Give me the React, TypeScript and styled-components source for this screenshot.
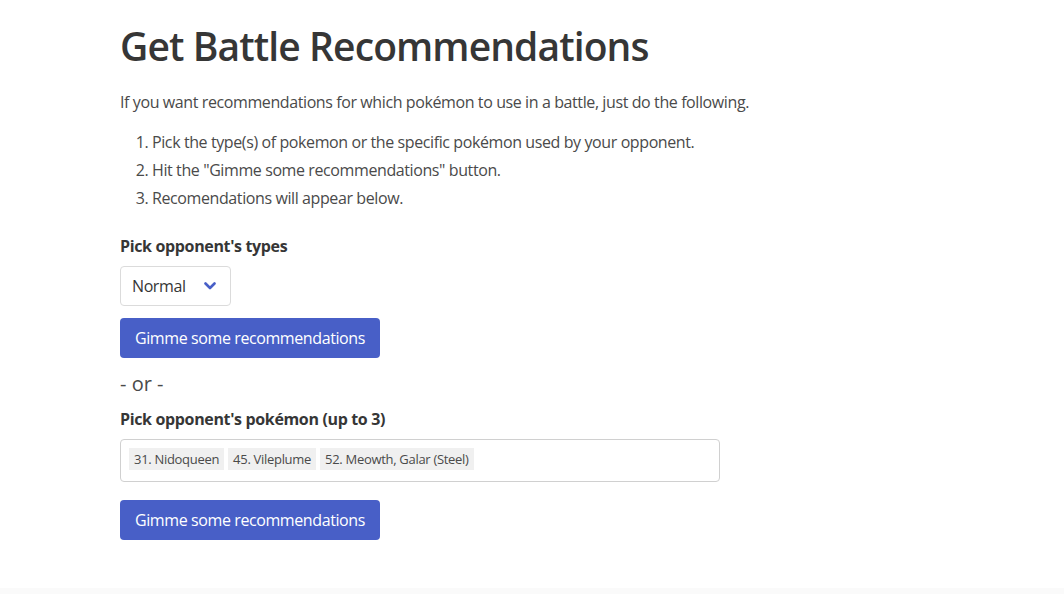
import React from "react";
import styled, { createGlobalStyle } from "styled-components";

const Global = createGlobalStyle`
  html, body { margin: 0; padding: 0; background: #fff; }
  body { font-family: "Open Sans", "Noto Sans", sans-serif; color: #4a4a4a; font-size: 16px; line-height: 1.5; }
  * { box-sizing: border-box; }
`;

const Page = styled.div`
  min-height: 594px;
  display: flex;
  flex-direction: column;
`;

const Main = styled.main`
  flex: 1;
  padding: 24px 0 48px 120px;
`;

const Title = styled.h1`
  margin: 0 0 22px;
  font-size: 39px;
  font-weight: 600;
  line-height: 44px;
  color: #363636;
  letter-spacing: -0.9px;
`;

const Text = styled.p`
  margin: 0 0 16px;
  font-size: 16px;
  line-height: 24px;
  letter-spacing: -0.4px;
`;

const Steps = styled.ol`
  margin: 0 0 24px;
  padding-left: 32px;
  font-size: 16px;
  line-height: 24px;
  letter-spacing: -0.4px;
  li + li { margin-top: 4px; }
`;

const Field = styled.div`
  margin-bottom: 12px;
`;

const Label = styled.label`
  display: block;
  font-weight: 700;
  font-size: 16px;
  line-height: 24px;
  color: #363636;
  margin-bottom: 8px;
  letter-spacing: -0.35px;
`;

const SelectBox = styled.div`
  display: flex;
  align-items: center;
  justify-content: space-between;
  height: 40px;
  width: 111px;
  padding: 0 14px 0 11px;
  border: 1px solid #dbdbdb;
  border-radius: 4px;
  color: #363636;
  font-size: 16px;
  letter-spacing: -0.4px;
`;

const Button = styled.button`
  display: flex;
  align-items: center;
  justify-content: center;
  height: 40px;
  border: none;
  border-radius: 4px;
  background: #485fc7;
  color: #fff;
  font-family: inherit;
  font-size: 16px;
  letter-spacing: -0.4px;
  white-space: nowrap;
  padding: 0 15px;
`;

const Or = styled.div`
  margin: 11px 0 8px;
  font-size: 20px;
  line-height: 30px;
  color: #4a4a4a;
`;

const MultiBox = styled.div`
  width: 600px;
  height: 43px;
  border: 1px solid #d0d0d0;
  border-radius: 4px;
  display: flex;
  align-items: flex-start;
  gap: 4px;
  padding: 8px 0 0 8px;
  margin-bottom: 18px;
`;

const Tag = styled.span`
  background: #f0f0f0;
  color: #4a4a4a;
  font-size: 13px;
  line-height: 22px;
  height: 22px;
  padding: 0 5px;
  letter-spacing: -0.3px;
`;

const Footer = styled.footer`
  height: 6px;
  background: #fafafa;
`;

const Chevron = () => (
  <svg width="12" height="8" viewBox="0 0 12 8">
    <path d="M1.5 1.5 L6 6 L10.5 1.5" fill="none" stroke="#485fc7" strokeWidth="2.6" strokeLinecap="round" strokeLinejoin="round" />
  </svg>
);

export default function App() {
  return (
    <Page>
      <Global />
      <Main>
        <Title>Get Battle Recommendations</Title>
        <Text>If you want recommendations for which pokémon to use in a battle, just do the following.</Text>
        <Steps>
          <li>Pick the type(s) of pokemon or the specific pokémon used by your opponent.</li>
          <li>Hit the "Gimme some recommendations" button.</li>
          <li>Recomendations will appear below.</li>
        </Steps>
        <Field>
          <Label>Pick opponent's types</Label>
          <SelectBox>
            <span>Normal</span>
            <Chevron />
          </SelectBox>
        </Field>
        <Button>Gimme some recommendations</Button>
        <Or>- or -</Or>
        <Field>
          <Label>Pick opponent's pokémon (up to 3)</Label>
          <MultiBox>
            <Tag>31. Nidoqueen</Tag>
            <Tag>45. Vileplume</Tag>
            <Tag>52. Meowth, Galar (Steel)</Tag>
          </MultiBox>
        </Field>
        <Button>Gimme some recommendations</Button>
      </Main>
      <Footer />
    </Page>
  );
}
